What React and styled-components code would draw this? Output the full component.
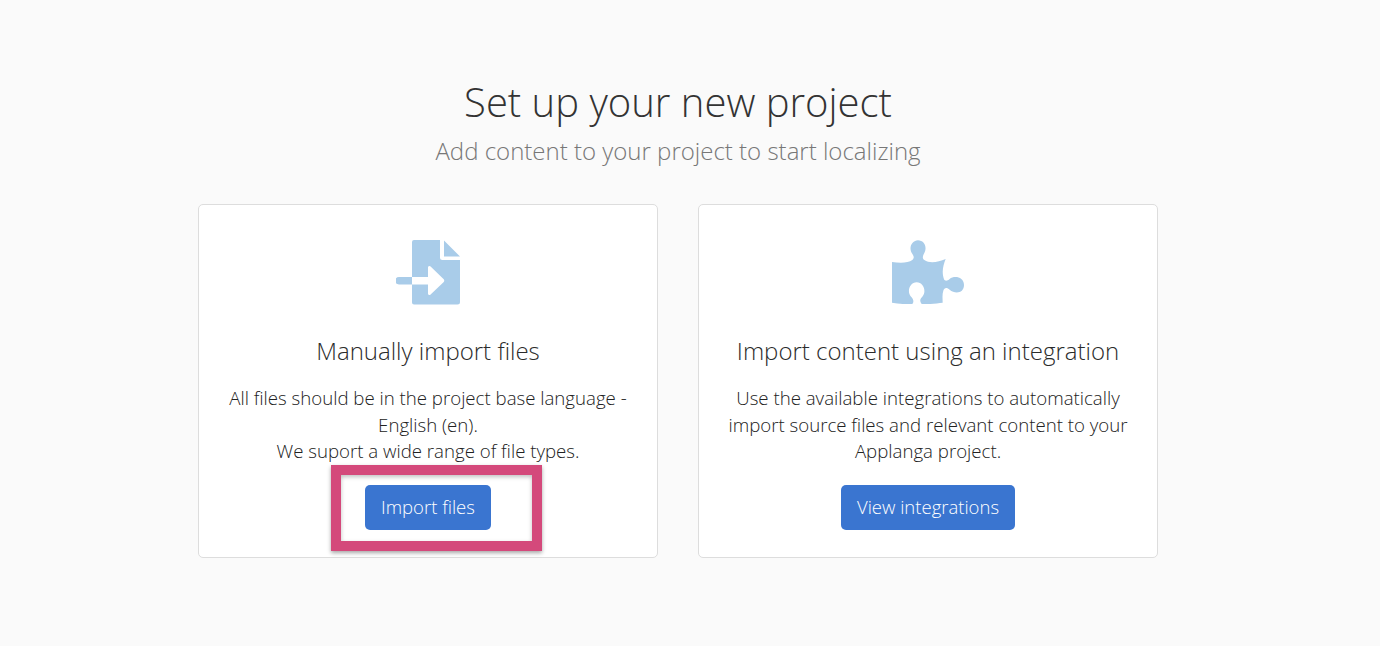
import React from "react";
import styled, { createGlobalStyle } from "styled-components";

const Global = createGlobalStyle`
  html, body { margin: 0; padding: 0; background: #fafafa; }
  body { font-family: "Open Sans", "Liberation Sans", sans-serif; color: #333; overflow: hidden; }
`;

const Page = styled.main`
  width: 1356px;
  height: 646px;
  padding-top: 76px;
  box-sizing: border-box;
  display: flex;
  flex-direction: column;
  align-items: center;
`;

const Title = styled.h1`
  margin: 0;
  font-size: 40px;
  line-height: 52px;
  font-weight: 300;
  color: #333;
`;

const Subtitle = styled.p`
  margin: 7px 0 0;
  font-size: 24px;
  line-height: 32px;
  font-weight: 300;
  color: #777;
`;

const Cards = styled.div`
  display: flex;
  gap: 40px;
  margin-top: 37px;
`;

const Card = styled.section`
  position: relative;
  width: 460px;
  height: 354px;
  box-sizing: border-box;
  padding: 35px 24px 0;
  background: #fff;
  border: 1px solid #ddd;
  border-radius: 5px;
  display: flex;
  flex-direction: column;
  align-items: center;
  text-align: center;
`;

const IconBox = styled.div`
  height: 65px;
  display: flex;
  align-items: flex-start;
  justify-content: center;
`;

const CardTitle = styled.h2`
  margin: 29px 0 0;
  font-size: 24px;
  line-height: 34px;
  font-weight: 300;
  color: #2b2b2b;
`;

const CardText = styled.p`
  margin: 17px 0 0;
  font-size: 18.65px;
  line-height: 26.5px;
  font-weight: 300;
  color: #222;
`;

const Button = styled.button`
  margin-top: 20px;
  height: 45px;
  padding: 0 16px 2px;
  border: 0;
  border-radius: 5px;
  background: #3a75d0;
  color: #fff;
  font-family: inherit;
  font-size: 18.5px;
  font-weight: 300;
`;

const Highlight = styled.div`
  position: absolute;
  left: 132px;
  top: 260px;
  width: 211px;
  height: 86px;
  box-sizing: border-box;
  border: 10px solid #d4497b;
  box-shadow: 0 2px 4px rgba(0, 0, 0, 0.35), inset 0 2px 4px rgba(0, 0, 0, 0.25);
  pointer-events: none;
`;

const FileIcon = () => (
  <svg width="65" height="65" viewBox="0 0 65 65" fill="none">
    <path
      d="M18 0H44V17.5a2.5 2.5 0 0 0 2.5 2.5H64V62a2.5 2.5 0 0 1-2.5 2.5H18a2 2 0 0 1-2-2V2a2 2 0 0 1 2-2Z"
      fill="#a9cce9"
    />
    <path d="M48 0.5 64 16.5H48Z" fill="#a9cce9" />
    <path d="M3 37H16V44.5H3a3.75 3.75 0 0 1 0-7.5Z" fill="#a9cce9" />
    <path
      d="M16 37H32V27.5c0-1.5 1.6-2 2.6-1L47.5 39c1 1 1 2.2 0 3.2L34.6 54.5c-1 1-2.6.5-2.6-1V44.5H16Z"
      fill="#fff"
    />
  </svg>
);

const PuzzleIcon = () => (
  <svg width="72" height="64" viewBox="36 30 216 192" fill="none">
    <path
      d="M36 96C58 99 84 100 97 90C105 83 100 76 94 67C86 50 98 31 114 31C131 31 142 49 134 67C129 76 125 84 133 90C150 102 175 96 197 87C190 105 184 125 192 148C196 155 203 152 209 147C222 136 252 140 252 165C252 190 225 193 209 179C201 172 193 172 190 182C186 194 188 208 188 218C170 220 145 224 125 222C118 214 120 207 128 199C140 183 130 157 110 157C90 157 80 183 92 199C100 207 103 214 97 222C77 223 55 222 36 218Z"
      fill="#a9cce9"
    />
  </svg>
);

export default function App() {
  return (
    <>
      <Global />
      <Page>
        <Title>Set up your new project</Title>
        <Subtitle>Add content to your project to start localizing</Subtitle>
        <Cards>
          <Card>
            <IconBox><FileIcon /></IconBox>
            <CardTitle>Manually import files</CardTitle>
            <CardText>
              All files should be in the project base language -<br />
              English (en).<br />
              We suport a wide range of file types.
            </CardText>
            <Button>Import files</Button>
            <Highlight />
          </Card>
          <Card>
            <IconBox><PuzzleIcon /></IconBox>
            <CardTitle>Import content using an integration</CardTitle>
            <CardText>
              Use the available integrations to automatically<br />
              import source files and relevant content to your<br />
              Applanga project.
            </CardText>
            <Button>View integrations</Button>
          </Card>
        </Cards>
      </Page>
    </>
  );
}
